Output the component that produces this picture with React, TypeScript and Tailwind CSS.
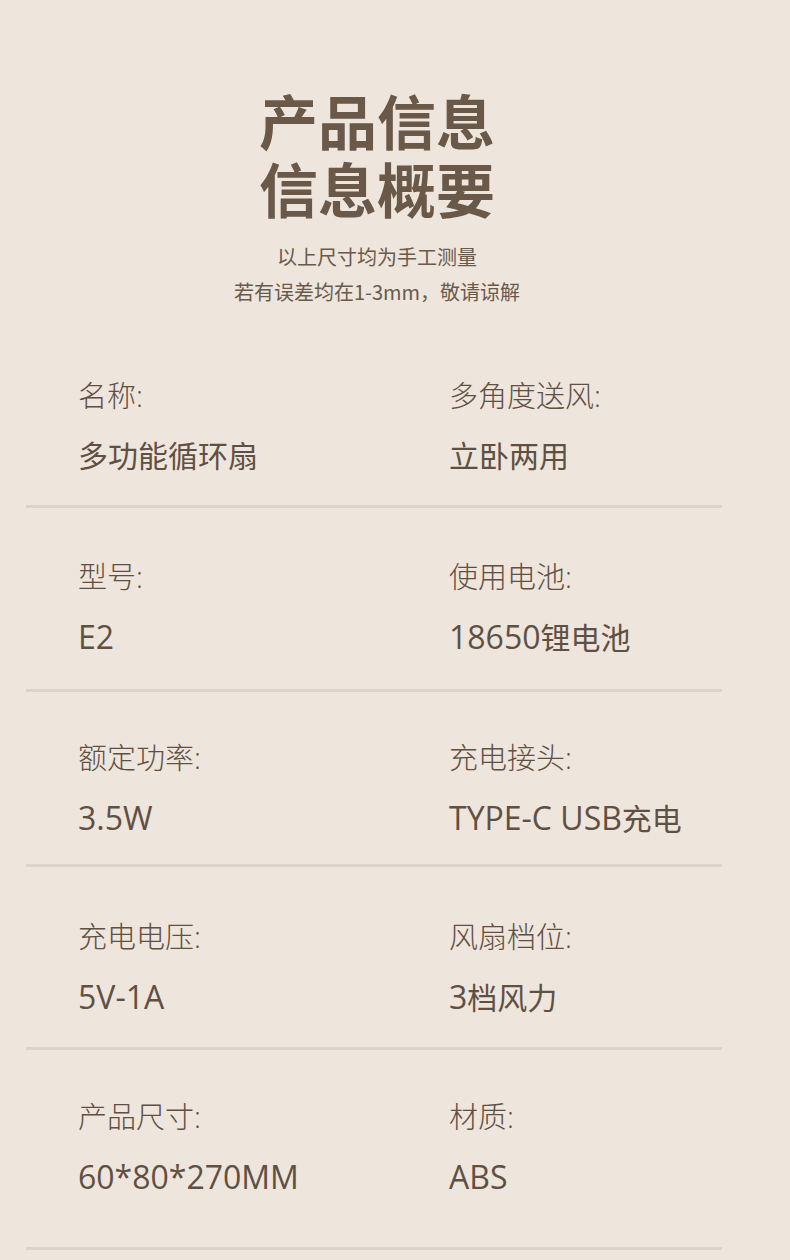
const specs: [string, string, string, string][] = [
  ["名称:", "多功能循环扇", "多角度送风:", "立卧两用"],
  ["型号:", "E2", "使用电池:", "18650锂电池"],
  ["额定功率:", "3.5W", "充电接头:", "TYPE-C USB充电"],
  ["充电电压:", "5V-1A", "风扇档位:", "3档风力"],
  ["产品尺寸:", "60*80*270MM", "材质:", "ABS"],
];

// spacing per row, tuned to the picture
const rowSpace = [
  "pt-0 pb-[29px]",
  "pt-[49px] pb-[31px]",
  "pt-[46px] pb-[25px]",
  "pt-[50px] pb-[29px]",
  "pt-[47px] pb-[49px]",
];

const latin = { fontFamily: '"Open Sans", "Noto Sans CJK SC", sans-serif' };

function Value({ text }: { text: string }) {
  const parts = text.split(/([\u4e00-\u9fff]+)/).filter(Boolean);
  return (
    <div className="mt-[20px] text-[30px] leading-[40px] font-normal text-[#5f5044]" style={latin}>
      {parts.map((p, i) =>
        /[\u4e00-\u9fff]/.test(p) ? (
          <span key={i}>{p}</span>
        ) : (
          <span key={i} className="text-[32px]">
            {p}
          </span>
        )
      )}
    </div>
  );
}

function Cell({ label, value }: { label: string; value: string }) {
  return (
    <div className="flex flex-col">
      <div className="text-[29px] leading-[40px] font-light text-[#5f5044]" style={latin}>
        {label}
      </div>
      <Value text={value} />
    </div>
  );
}

export default function App() {
  return (
    <div
      className="w-[790px] h-[1260px] overflow-hidden bg-[#eee5dc]"
      style={{ fontFamily: '"Noto Sans CJK SC", "Noto Sans", sans-serif' }}
    >
      <div className="flex flex-col items-center pt-[86px] pr-[36px]">
        <h1 className="flex flex-col items-center text-[59px] leading-[68px] font-bold text-[#6a5849]">
          <span>产品信息</span>
          <span>信息概要</span>
        </h1>
        <div className="mt-[17px] flex flex-col items-center text-[20px] leading-[35px] text-[#6a5a4d]">
          <span>以上尺寸均为手工测量</span>
          <span>若有误差均在1-3mm，敬请谅解</span>
        </div>
      </div>
      <div className="ml-[26px] w-[696px] mt-[67px]">
        {specs.map((s, i) => (
          <div key={i} className={`border-b-[3px] border-[#ddd4c9] ${rowSpace[i]}`}>
            <div className="grid grid-cols-[371px_1fr] pl-[52px]">
              <Cell label={s[0]} value={s[1]} />
              <Cell label={s[2]} value={s[3]} />
            </div>
          </div>
        ))}
      </div>
    </div>
  );
}
